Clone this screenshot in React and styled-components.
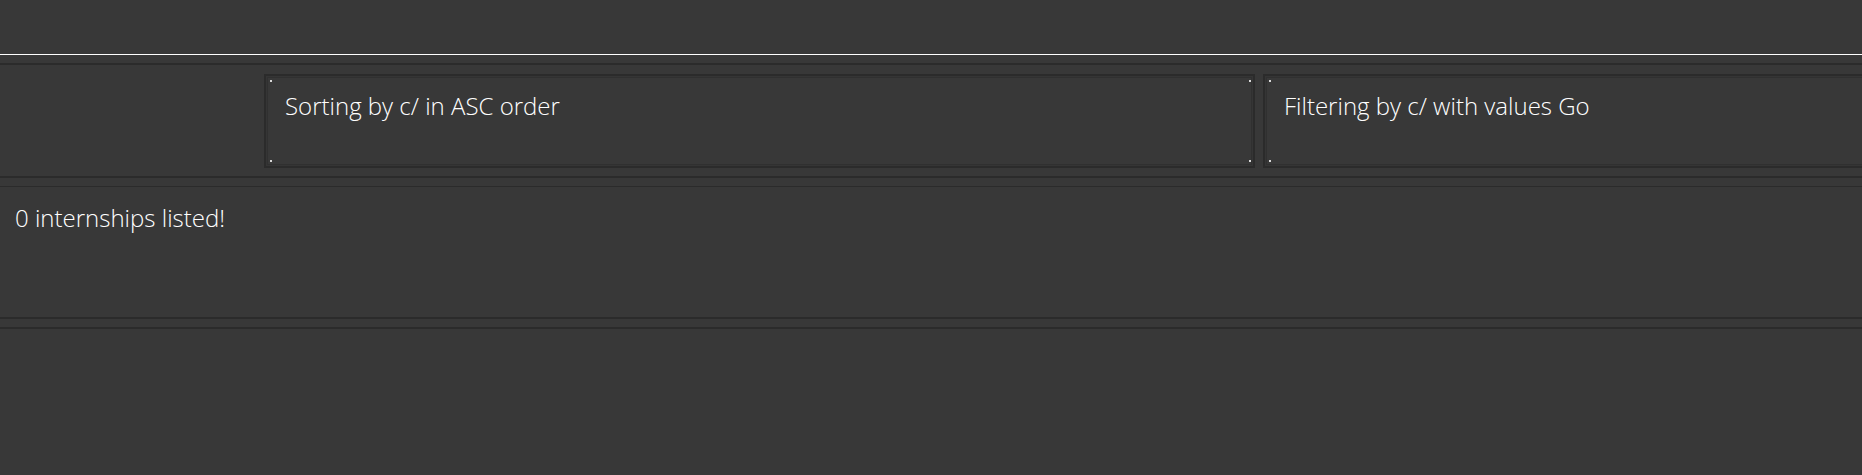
import React from "react";
import styled, { createGlobalStyle } from "styled-components";

const Global = createGlobalStyle`
  html, body { margin: 0; padding: 0; background: #383838; }
  body { font-family: "Open Sans", "Liberation Sans", sans-serif; overflow: hidden; }
`;

const Window = styled.div`
  width: 1862px;
  height: 475px;
  display: flex;
  flex-direction: column;
  background: #383838;
  overflow: hidden;
`;

const CommandBox = styled.div`
  height: 54px;
  flex: none;
  border-bottom: 1px solid #ffffff;
`;

const Pane = styled.div`
  flex: none;
  margin-top: ${(p) => p.$gap}px;
  border-top: ${(p) => p.$top}px solid #2b2b2b;
  border-bottom: ${(p) => p.$bottom}px solid #2b2b2b;
  height: ${(p) => p.$height}px;
  box-sizing: content-box;
`;

const StatusRow = styled.div`
  display: flex;
  gap: 8px;
  padding-top: 9px;
  padding-left: 264px;
  overflow: hidden;
`;

const dot = "linear-gradient(#d8d8d8, #d8d8d8)";

const StatusBox = styled.div`
  flex: none;
  width: 991px;
  height: 94px;
  box-sizing: border-box;
  border: 2px solid #2b2b2b;
  box-shadow: inset 0 0 0 1px #353535, inset 0 0 0 2px #303030;
  background:
    ${dot} left 4px top 4px / 2px 2px no-repeat,
    ${dot} left 4px bottom 4px / 2px 2px no-repeat,
    ${(p) => (p.$rightDots ? `${dot} right 2px top 4px / 2px 2px no-repeat, ${dot} right 2px bottom 4px / 2px 2px no-repeat,` : "")}
    #383838;
  padding: 14px 0 0 19px;
`;

const Message = styled.div`
  color: #ffffff;
  font-family: "Open Sans", "Liberation Sans", sans-serif;
  font-weight: 300;
  font-size: 24px;
  line-height: 32px;
  white-space: nowrap;
`;

const ResultBody = styled.div`
  padding: 15px 0 0 15px;
`;

export default function App() {
  return (
    <>
      <Global />
      <Window>
        <CommandBox />
        <Pane $gap={8} $top={2} $bottom={2} $height={111}>
          <StatusRow>
            <StatusBox $rightDots>
              <Message>Sorting by c/ in ASC order</Message>
            </StatusBox>
            <StatusBox>
              <Message>Filtering by c/ with values Go</Message>
            </StatusBox>
          </StatusRow>
        </Pane>
        <Pane $gap={8} $top={1} $bottom={2} $height={130}>
          <ResultBody>
            <Message>0 internships listed!</Message>
          </ResultBody>
        </Pane>
        <Pane $gap={8} $top={2} $bottom={0} $height={140} />
      </Window>
    </>
  );
}
